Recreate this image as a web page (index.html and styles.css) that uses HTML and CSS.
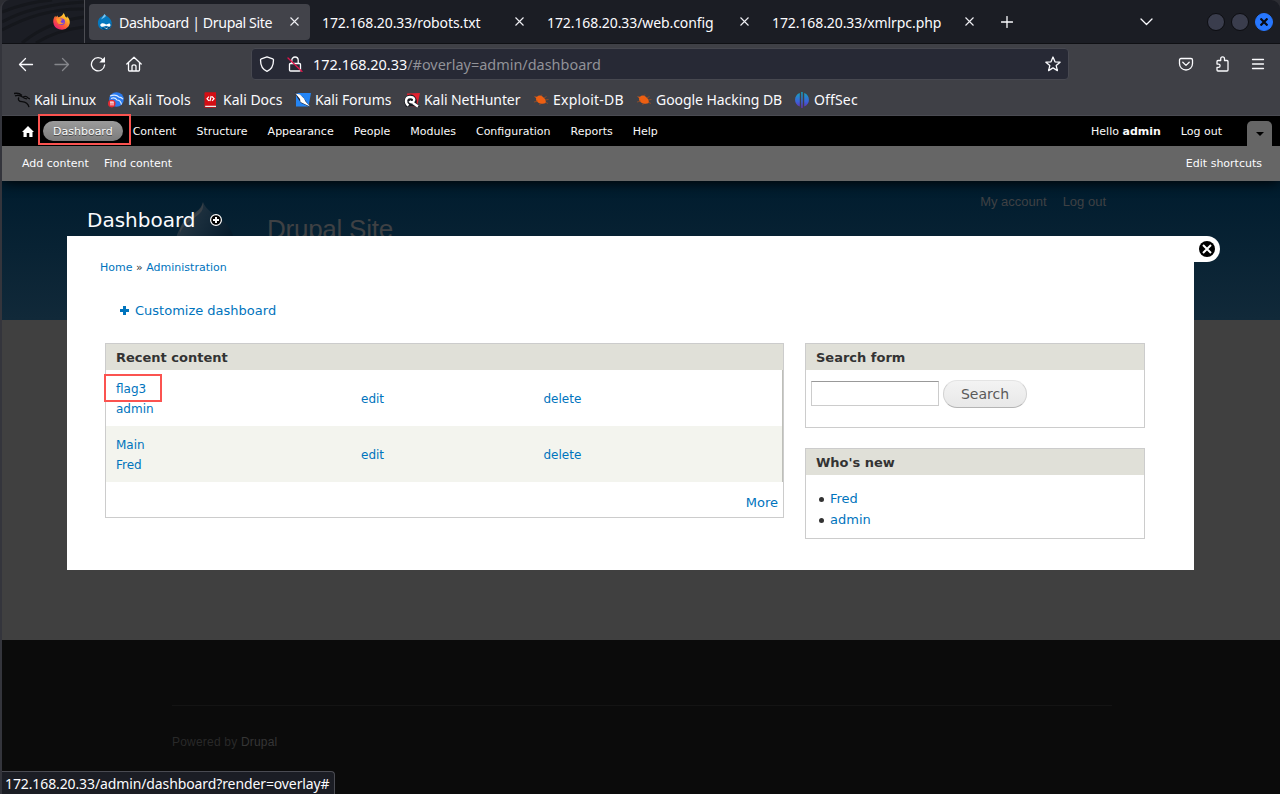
FILE: index.html
```html
<!DOCTYPE html>
<html lang="en">
<head>
    <meta charset="UTF-8">
    <meta name="viewport" content="width=device-width, initial-scale=1.0">
    <title>Dashboard | Drupal Site</title>
    <link rel="stylesheet" href="styles.css">
</head>
<body>
    <div class="window">
        <!-- Tab strip -->
        <div class="tabs">
            <div class="pinned">
                <svg class="wallpaper" width="82" height="43" viewBox="0 0 82 43">
                    <path d="M0 22Q30 5 82 2M0 30Q40 8 82 9M20 43Q45 22 82 17M34 43Q55 30 82 27M0 12Q25 2 50 0"/>
                </svg>
                <svg class="firefox" width="17" height="17" viewBox="0 0 16 16">
                    <defs>
                        <linearGradient id="fox" x1="1" y1="0" x2="0.2" y2="1">
                            <stop offset="0" stop-color="#fff44f"/>
                            <stop offset="0.35" stop-color="#ffb02a"/>
                            <stop offset="0.65" stop-color="#ff5a36"/>
                            <stop offset="1" stop-color="#e5177b"/>
                        </linearGradient>
                    </defs>
                    <path fill="url(#fox)" d="M10 0c1 1.500 1.300 2.300 1.500 3.200.9.300 1.400.8 1.900 1.400 0-.8-.1-1.200-.4-1.800 3.300 3 3.600 7.200 1.300 10.100A8 8 0 0 1 .2 8.500c0-2.800.7-4.500 2-6l.5 1.700 1.300-1.900c.2.800.6 1.300 1.100 1.700C7 3.300 8.900 2.700 10 0z"/>
                    <circle cx="8.200" cy="8.200" r="3" fill="#7540d8"/>
                    <path fill="#ff9a2e" d="M3 5.500c1.800-1 3.400-.5 4.300.3l1.600.4c-.2.900-1.400 1-1.700 1.600-.3 1.400 1.500 2 3.200 1.200-1.200 2.400-6 2-6.600-.8z"/>
                </svg>
            </div>
            <div class="tab active">
                <svg class="favicon" width="16" height="16" viewBox="0 0 16 16">
                    <path fill="#0678be" d="M7.500 0c1 1.700 2.600 2.200 4 3.300 4.300 3.500 4.200 9.200.7 11.600-3 2-7.800 1.200-9.900-1.500C-.2 9.700.9 5 3.800 3.100 5.200 2.200 7 1.500 7.500 0z"/>
                    <path fill="#00497c" d="M4.500 13.500c3 .8 7.500-.6 9.800-4.500.1 4-3 6.900-6.500 6.900-1.400 0-2.700-1-3.300-2.400z"/>
                    <path fill="#fff" d="M5.400 9.200c2-.3 2.700 1.200 3.900 1.200s1.900-1.200 3.100-.9c1.800.5 1.400 3.500-.6 3.300-1 0-1.800-1-2.700-1-1 0-1.800 1.100-3.400 1-3.300-.2-3-3.300-.3-3.600zM7.300 13.600c1.300.6 2.500.5 3.800-.1-.6 1.700-3.200 1.700-3.800.1z"/>
                    <path fill="#7cc4ee" d="M7.500 0l1.500 2-2 1.800-3 1.600z"/>
                </svg>
                <span class="tab-title title-main">Dashboard | Drupal Site</span>
                <svg class="close" width="9" height="9" viewBox="0 0 9 9"><path d="M.5.5l8 8M8.500.5l-8 8"/></svg>
            </div>
            <div class="tab">
                <span class="tab-title">172.168.20.33/robots.txt</span>
                <svg class="close" width="9" height="9" viewBox="0 0 9 9"><path d="M.5.5l8 8M8.500.5l-8 8"/></svg>
            </div>
            <div class="tab">
                <span class="tab-title">172.168.20.33/web.config</span>
                <svg class="close" width="9" height="9" viewBox="0 0 9 9"><path d="M.5.5l8 8M8.500.5l-8 8"/></svg>
            </div>
            <div class="tab">
                <span class="tab-title">172.168.20.33/xmlrpc.php</span>
                <svg class="close" width="9" height="9" viewBox="0 0 9 9"><path d="M.5.5l8 8M8.500.5l-8 8"/></svg>
            </div>
            <svg class="line-icon new-tab" width="12" height="12" viewBox="0 0 12 12"><path d="M6 .5v11M.5 6h11"/></svg>
            <svg class="line-icon all-tabs" width="13" height="8" viewBox="0 0 13 8"><path d="M1 1l5.500 5.500L12 1"/></svg>
            <div class="window-buttons">
                <span class="dot"></span>
                <span class="dot"></span>
                <span class="dot dot-close">
                    <svg width="8" height="8" viewBox="0 0 8 8"><path d="M.5.500l7 7M7.500.500l-7 7"/></svg>
                </span>
            </div>
        </div>

        <!-- Navigation bar -->
        <div class="navbar">
            <div class="nav-buttons">
                <svg class="line-icon" width="16" height="16" viewBox="0 0 16 16"><path d="M14.500 8.500h-13M7.500 2.500l-6 6 6 6"/></svg>
                <svg class="line-icon disabled" width="16" height="16" viewBox="0 0 16 16"><path d="M1 8.500h13.500M8.500 2.500l6 6-6 6"/></svg>
                <svg class="line-icon" width="16" height="16" viewBox="0 0 16 16"><path d="M13.300 4.300A6.600 6.600 0 1 0 14.600 9"/><path class="solid" d="M15 .8v5.700H9.300z"/></svg>
                <svg class="line-icon" width="16" height="16" viewBox="0 0 16 16"><path d="M.8 8L8 1.200 15.200 8M2.500 6.800V14c0 .6.400 1 1 1h9c.6 0 1-.4 1-1V6.800M6 15v-4.500c0-1 .8-1.700 2-1.700s2 .7 2 1.700V15"/></svg>
            </div>
            <div class="urlbar">
                <svg class="line-icon" width="16" height="16" viewBox="0 0 16 16"><path d="M8 .8l5.700 2c.5.200.8.500.8 1C14.500 9 12.700 13.500 8 15.300 3.300 13.500 1.500 9 1.500 3.800c0-.5.300-.8.800-1z"/></svg>
                <svg class="line-icon lock" width="16" height="16" viewBox="0 0 16 16"><path d="M4.800 7.500V4.200a3.200 3.200 0 0 1 6.400 0v3.300M3.500 7.500h9c.6 0 1 .4 1 1V14c0 .6-.4 1-1 1h-9c-.6 0-1-.4-1-1V8.500c0-.6.400-1 1-1z"/><path class="slash" d="M1 2l14 13.500"/></svg>
                <span class="url">172.168.20.33<span class="url-path">/#overlay=admin/dashboard</span></span>
                <svg class="line-icon star" width="16" height="16" viewBox="0 0 16 16"><path d="M8 1l2 4.800 5.100.4-3.900 3.400 1.200 5L8 11.900l-4.400 2.700 1.200-5L.9 6.200 6 5.800z"/></svg>
            </div>
            <div class="nav-tools">
                <svg class="line-icon" width="16" height="16" viewBox="0 0 16 16"><path d="M3 2.500h10c.9 0 1.500.6 1.500 1.500v3.500c0 3.700-2.800 6.500-6.500 6.500S1.500 11.200 1.500 7.500V4c0-.9.600-1.500 1.500-1.500zM4.800 6.300L8 9.400l3.200-3.100"/></svg>
                <svg class="line-icon" width="16" height="16" viewBox="0 0 16 16"><path d="M3 5.500c0-.6.400-1 1-1h2.700V2.700a1.900 1.900 0 0 1 3.800 0v1.800H13c.6 0 1 .4 1 1V14c0 .6-.4 1-1 1H4c-.6 0-1-.4-1-1v-2.700h1.500a1.600 1.600 0 0 0 0-3.200H3z"/></svg>
                <svg class="line-icon" width="16" height="16" viewBox="0 0 16 16"><path d="M2.500 3.500h11M2.500 8h11M2.500 12.500h11"/></svg>
            </div>
        </div>

        <!-- Bookmarks -->
        <div class="bookmarks">
            <div class="bookmark linux">
                <svg width="16" height="16" viewBox="0 0 16 16"><path fill="none" stroke="#0b0b0d" stroke-width="1.300" d="M0 1.500c3-.6 6 0 8 2M1 3.800c3-1 6 0 8 1.500M5 5.500c-1.500 2 0 4 3 4.200 4 .2 6 1.300 7 5.500M9 5c2-1 4-.5 5 1l2 1M9 5c1 2 3 1.500 4 2"/></svg>
                <span>Kali Linux</span>
            </div>
            <div class="bookmark tools">
                <svg width="16" height="16" viewBox="0 0 16 16"><circle cx="8.500" cy="7.500" r="7.300" fill="#2a7bef"/><path fill="none" stroke="#dcebff" stroke-width="1.200" d="M2 4c4-1.500 7-1 9 1.200 2 0 3 .8 4 2M3 6.500c3-1.200 5 0 6 1.500 3 0 4 2 4.500 4.500"/><circle cx="3.800" cy="11.600" r="3.800" fill="#e22b35"/><path stroke="#fff" fill="none" d="M2 10h3.600M3 10v3.500M5 10v3.500"/></svg>
                <span>Kali Tools</span>
            </div>
            <div class="bookmark docs">
                <svg width="16" height="16" viewBox="0 0 16 16"><path fill="#d40e14" d="M1.500 1.500C1.500.8 2 .3 2.700.3H13v15.400H1.500z"/><path fill="#eee" d="M2.200 13.700H13V15H2.200z"/><path fill="none" stroke="#fff" stroke-width="1.200" d="M6 4.700L4 6.700l2 2.200M9 4.500l2.100 2.200L9 8.900M8.200 4L6.900 9.200"/></svg>
                <span>Kali Docs</span>
            </div>
            <div class="bookmark forums">
                <svg width="16" height="16" viewBox="0 0 16 16"><path fill="#2485f5" d="M1 1h15l-2.500 13.500H1z"/><path fill="#17243f" d="M0 0l8 5 7 10-9-4-4-6z"/><path fill="#fff" d="M.5 1.500L5 2.500l4 4 1.500 3 4.500 5-5.500-2.500-4-2-.5-3z"/></svg>
                <span>Kali Forums</span>
            </div>
            <div class="bookmark nethunter">
                <svg width="16" height="16" viewBox="0 0 16 16"><path fill="#e3212f" d="M3 1.500L16 1l-3 13.500L5 14z"/><path fill="#191b22" d="M0 10c0-4 3-7.500 7-7.500S14 8 12.500 11l3.500 4-9-1-5 1z"/><path fill="none" stroke="#fff" stroke-width="2.400" d="M4.500 13.500C.5 10.500 1.500 5 6 5c4.500 0 5 3 3.500 4.500-1 1-3 1-4-.5M9 11l5 3.500"/></svg>
                <span>Kali NetHunter</span>
            </div>
            <div class="bookmark exploit">
                <svg width="16" height="16" viewBox="0 0 16 16"><path fill="#ed5f12" d="M1 4.500l3 .3C5.500 3 8 3 10 5c2 1.400 3.300 3.600 2.800 6-2.800 1.500-7 .8-8.800-1.500C2.800 8 3 7 3.200 6z"/><path stroke="#a9501f" stroke-width=".7" fill="none" d="M8 4l1-1.500M11 6l2.500-1.500M12 8l3.500-.5M12 10l3 1.500M8 11l-1.500 2M5 9l-4 1"/></svg>
                <span>Exploit-DB</span>
            </div>
            <div class="bookmark google">
                <svg width="16" height="16" viewBox="0 0 16 16"><path fill="#ed5f12" d="M1 4.500l3 .3C5.500 3 8 3 10 5c2 1.400 3.300 3.600 2.800 6-2.800 1.500-7 .8-8.800-1.500C2.800 8 3 7 3.200 6z"/><path stroke="#a9501f" stroke-width=".7" fill="none" d="M8 4l1-1.500M11 6l2.500-1.500M12 8l3.500-.5M12 10l3 1.500M8 11l-1.500 2M5 9l-4 1"/></svg>
                <span>Google Hacking DB</span>
            </div>
            <div class="bookmark offsec">
                <svg width="16" height="16" viewBox="0 0 16 16">
                    <defs><linearGradient id="offsec" x1="0" y1="0" x2="0" y2="1"><stop offset="0" stop-color="#14a5bd"/><stop offset=".6" stop-color="#3b62d9"/><stop offset="1" stop-color="#662cae"/></linearGradient></defs>
                    <path fill="url(#offsec)" d="M5.800 1v13.500C-.5 12.500-.5 3 5.800 1zM7.200 0h1.500v16H7.200zM10.200 1c6.300 2 6.300 11.500 0 13.500z"/>
                </svg>
                <span>OffSec</span>
            </div>
        </div>

        <!-- Drupal admin toolbar -->
        <div class="toolbar">
            <div class="menu">
                <svg class="home" width="12" height="11" viewBox="0 0 12 11"><path fill="#fff" d="M6 0l6 6h-1.500v5H7.300V7H4.700v4H1.500V6H0z"/></svg>
                <a class="current">Dashboard<span class="mark mark-dashboard"></span></a>
                <a>Content</a>
                <a>Structure</a>
                <a>Appearance</a>
                <a>People</a>
                <a>Modules</a>
                <a>Configuration</a>
                <a>Reports</a>
                <a>Help</a>
            </div>
            <div class="user-menu">
                <span>Hello <strong>admin</strong></span>
                <span>Log out</span>
                <span class="toggle"></span>
            </div>
        </div>
        <div class="shortcuts">
            <span>Add content</span>
            <span>Find content</span>
            <span class="edit-shortcuts">Edit shortcuts</span>
        </div>

        <!-- Site behind the overlay -->
        <div class="site">
            <div class="site-header">
                <svg class="drop" width="60" height="60" viewBox="0 0 60 60">
                    <defs><linearGradient id="drop" x1="0" y1="0" x2="1" y2="0.500"><stop offset="0" stop-color="#2f3b45"/><stop offset="0.500" stop-color="#182c3b"/><stop offset="1" stop-color="#061b2b"/></linearGradient></defs>
                    <path fill="url(#drop)" d="M27 0c3 8 10 11 17 16 9 7 14 15 14 25 0 12-10 19-28 19S0 52 0 40c0-12 8-19 15-24C22 11 27 6 27 0z"/>
                    <path fill="#43474b" opacity=".7" d="M27 0c1 6-1 10-5 13C14 19 7 23 4 31 3 20 14 15 20 10 24 7 26 4 27 0z"/>
                </svg>
                <span class="site-name">Drupal Site</span>
                <div class="site-links"><span>My account</span><span>Log out</span></div>
            </div>
            <div class="site-body"></div>
            <div class="site-footer">
                <div class="powered">Powered by <span>Drupal</span></div>
            </div>

            <div class="overlay">
                <div class="overlay-title">
                    <h1>Dashboard</h1>
                    <svg width="12" height="12" viewBox="0 0 12 12"><circle cx="6" cy="6" r="5.400" fill="#000" stroke="#fff" stroke-width="1.200"/><path stroke="#fff" stroke-width="2" d="M6 3v6M3 6h6"/></svg>
                </div>
                <div class="overlay-close">
                    <svg width="16" height="16" viewBox="0 0 16 16"><circle cx="8" cy="8" r="8"/><path d="M4 4l8 8M12 4l-8 8"/></svg>
                </div>
                <div class="overlay-content">
                    <div class="breadcrumb"><a>Home</a> » <a>Administration</a></div>
                    <div class="customize">
                        <svg width="9" height="9" viewBox="0 0 9 9"><path d="M4.500 0v9M0 4.500h9"/></svg>
                        <a>Customize dashboard</a>
                    </div>
                    <div class="dashboard">
                        <div class="block recent">
                            <h2>Recent content</h2>
                            <div class="rows">
                                <div class="row">
                                    <div class="node"><a class="flag">flag3<span class="mark mark-flag"></span></a><a>admin</a></div>
                                    <a>edit</a>
                                    <a>delete</a>
                                </div>
                                <div class="row even">
                                    <div class="node"><a>Main</a><a>Fred</a></div>
                                    <a>edit</a>
                                    <a>delete</a>
                                </div>
                            </div>
                            <a class="more">More</a>
                        </div>
                        <div class="sidebar">
                            <div class="block search">
                                <h2>Search form</h2>
                                <div class="search-form">
                                    <input type="text">
                                    <button>Search</button>
                                </div>
                            </div>
                            <div class="block">
                                <h2>Who's new</h2>
                                <ul>
                                    <li><a>Fred</a></li>
                                    <li><a>admin</a></li>
                                </ul>
                            </div>
                        </div>
                    </div>
                </div>
            </div>
        </div>
        <div class="status">172.168.20.33/admin/dashboard?render=overlay#</div>
    </div>
</body>
</html>
```

FILE: styles.css
```css
* {
    box-sizing: border-box;
}

body {
    margin: 0;
    background: #2c2d33;
    font-family: 'Noto Sans', sans-serif;
    font-size: 14px;
    color: #fbfbfe;
    overflow: hidden;
}

svg {
    display: block;
    flex: none;
}

.window {
    position: relative;
    height: 794px;
    border-left: 2px solid #34353c;
    border-radius: 9px 9px 0 0;
    overflow: hidden;
    white-space: nowrap;
}

/* Tab strip */
.tabs {
    display: flex;
    align-items: center;
    height: 44px;
    background: #1b1d24;
    border-bottom: 1px solid #0f1014;
}

.pinned {
    position: relative;
    width: 83px;
    height: 43px;
    padding: 13px 0 0 51px;
    border-right: 1px solid #4c4d53;
}

.wallpaper {
    position: absolute;
    top: 0;
    left: 0;
    fill: none;
    stroke: #15171c;
    stroke-width: 3;
}

.firefox {
    position: relative;
}

.tab {
    display: flex;
    align-items: center;
    width: 221px;
    height: 36px;
    margin-left: 4px;
    padding: 0 11px 0 8px;
    border-radius: 4px;
}

.tab.active {
    background: #42434a;
}

.favicon {
    margin-right: 6px;
}

.tab-title {
    padding-top: 2px;
    letter-spacing: -0.09px;
}

.title-main {
    font-size: 14.2px;
    letter-spacing: -0.4px;
}

.close {
    margin-left: auto;
    fill: none;
    stroke: #f0f0f4;
    stroke-width: 1.1;
}

.line-icon {
    fill: none;
    stroke: #fbfbfe;
    stroke-width: 1.3;
    stroke-linejoin: round;
    stroke-linecap: round;
}

.line-icon .solid {
    fill: #fbfbfe;
    stroke: none;
}

.line-icon.disabled {
    stroke: #85868b;
}

.new-tab {
    margin-left: 16px;
}

.all-tabs {
    margin-left: auto;
}

.window-buttons {
    display: flex;
    align-items: center;
    gap: 6px;
    margin: 0 7px 0 54px;
}

.dot {
    width: 18px;
    height: 18px;
    border: 1px solid #0c0d11;
    border-radius: 50%;
    background: #3a3d4d;
}

.dot-close {
    display: flex;
    align-items: center;
    justify-content: center;
    background: #2777ff;
    border-color: #2777ff;
}

.dot-close path {
    stroke: #080c16;
    stroke-width: 2.2;
}

/* Navigation bar */
.navbar {
    display: flex;
    align-items: center;
    height: 40px;
    background: #3f4046;
}

.nav-buttons {
    display: flex;
    gap: 20px;
    width: 249px;
    padding-left: 16px;
}

.urlbar {
    display: flex;
    align-items: center;
    width: 818px;
    height: 32px;
    padding: 0 7px;
    border: 1px solid #474850;
    border-radius: 4px;
    background: #272935;
}

.lock {
    margin: 0 10px 0 12px;
}

.lock .slash {
    stroke: #e2154c;
}

.url {
    font-size: 14.45px;
}

.url-path {
    color: #919298;
}

.star {
    margin-left: auto;
}

.nav-tools {
    display: flex;
    gap: 20px;
    margin-left: auto;
    padding-right: 14px;
}

/* Bookmarks */
.bookmarks {
    display: flex;
    height: 32px;
    padding-left: 12px;
    background: #3f4046;
    border-bottom: 1px solid #4a4b52;
}

.bookmark {
    display: flex;
    align-items: center;
    gap: 4px;
}

.linux {
    width: 94px;
    letter-spacing: -0.1px;
}

.tools {
    width: 95px;
    letter-spacing: 0.15px;
}

.docs {
    width: 92px;
}

.forums {
    width: 109px;
    letter-spacing: -0.1px;
}

.nethunter {
    width: 129px;
    letter-spacing: -0.07px;
}

.exploit {
    width: 103px;
    letter-spacing: 0.25px;
}

.google {
    width: 158px;
    letter-spacing: -0.06px;
}

.offsec {
    letter-spacing: 0.15px;
}

/* Drupal toolbar */
.toolbar,
.shortcuts,
.overlay {
    font-family: 'DejaVu Sans', sans-serif;
    font-size: 11px;
}

.toolbar {
    position: relative;
    z-index: 2;
    display: flex;
    height: 30px;
    background: #000;
    color: #fafafa;
}

.menu {
    display: flex;
    align-items: center;
    padding-left: 20px;
}

.menu a {
    height: 20px;
    padding: 0 10px;
    line-height: 22px;
}

.menu .home {
    margin-right: 9px;
}

.menu .current {
    position: relative;
    border-radius: 10px;
    background: linear-gradient(#9b9b9b, #7b7b7b);
    text-shadow: 0 1px 0 #444;
}

.mark {
    position: absolute;
    border: 2px solid #fb5350;
    z-index: 2;
}

.mark-dashboard {
    left: -5px;
    top: -7px;
    width: 93px;
    height: 31px;
}

.user-menu {
    display: flex;
    align-items: center;
    gap: 20px;
    margin-left: auto;
    padding-right: 8px;
}

.toggle {
    display: flex;
    align-self: flex-end;
    align-items: center;
    justify-content: center;
    width: 25px;
    height: 25px;
    margin-left: 5px;
    border-radius: 5px 5px 0 0;
    background: #666;
}

.toggle::after {
    content: "";
    border: 4px solid transparent;
    border-top: 4px solid #000;
    border-bottom: 0;
}

.shortcuts {
    position: relative;
    z-index: 1;
    display: flex;
    align-items: center;
    gap: 15px;
    height: 35px;
    padding: 0 18px 0 20px;
    background: #666;
    box-shadow: 0 1px 14px #000;
}

.edit-shortcuts {
    margin-left: auto;
}

/* Site behind the overlay */
.site {
    position: relative;
    font-family: 'Liberation Sans', sans-serif;
}

.site-header {
    display: flex;
    align-items: flex-start;
    height: 139px;
    padding: 0 174px;
    background: linear-gradient(#001c2e, #112939);
}

.drop {
    margin-top: 21px;
}

.site-name {
    margin: 33px 0 0 31px;
    font-size: 26px;
    letter-spacing: -0.25px;
    line-height: 30px;
    color: #3f4144;
}

.site-links {
    display: flex;
    gap: 16px;
    margin: 13px 0 0 auto;
    font-size: 13px;
    line-height: 16px;
    color: #3f4144;
}

.site-body {
    height: 320px;
    background: #404040;
}

.site-footer {
    height: 154px;
    padding: 65px 168px 0 170px;
    background: #0b0b0b;
}

.powered {
    padding-top: 28px;
    border-top: 1px solid #141414;
    font-size: 12px;
    letter-spacing: 0.2px;
    line-height: 16px;
    color: #292929;
}

.powered span {
    color: #363636;
}

/* Overlay */
.overlay {
    position: absolute;
    top: 0;
    left: 65px;
    width: 1127px;
}

.overlay-title {
    display: flex;
    align-items: center;
    gap: 14px;
    height: 55px;
    padding: 23px 0 0 20px;
}

.overlay-title h1 {
    margin: 0;
    font-size: 20px;
    font-weight: normal;
    line-height: 30px;
}

.overlay-close {
    position: absolute;
    top: 55px;
    right: -26px;
    width: 26px;
    height: 26px;
    padding: 5px;
    border-radius: 0 13px 13px 0;
    background: #fff;
}

.overlay-close path {
    stroke: #fff;
    stroke-width: 2;
}

.overlay-content {
    height: 334px;
    padding: 24px 49px 0 33px;
    background: #fff;
    color: #333;
}

.overlay-content a {
    color: #0074bd;
}

.breadcrumb {
    line-height: 16px;
}

.customize {
    display: flex;
    align-items: center;
    gap: 6px;
    margin: 25px 0 0 20px;
    font-size: 13px;
    line-height: 20px;
}

.customize svg {
    margin-bottom: 1px;
}

.customize path {
    stroke: #0074bd;
    stroke-width: 3;
}

.dashboard {
    display: flex;
    align-items: flex-start;
    gap: 21px;
    margin: 22px 0 0 5px;
}

.block {
    border: 1px solid #ccc;
}

.block h2 {
    height: 26px;
    margin: 0;
    padding-left: 10px;
    background: #e0e0d8;
    font-size: 13px;
    line-height: 28px;
}

.recent {
    width: 679px;
    height: 175px;
    font-size: 12px;
}

.rows {
    border-right: 1px solid #bebfb9;
}

.row {
    display: grid;
    grid-template-columns: 245px 182.5px 1fr;
    align-items: center;
    height: 56px;
    padding: 2px 0 0 10px;
}

.row.even {
    background: #f3f4ee;
}

.node a {
    display: block;
    line-height: 20px;
}

.node .flag {
    position: relative;
}

.mark-flag {
    left: -12px;
    top: -5px;
    width: 58px;
    height: 28px;
}

.more {
    display: block;
    padding: 11px 5px 0 0;
    font-size: 13px;
    line-height: 20px;
    text-align: right;
}

.sidebar {
    display: flex;
    flex-direction: column;
    gap: 20px;
    width: 340px;
}

.search {
    height: 85px;
}

.search-form {
    display: flex;
    align-items: flex-start;
    gap: 4px;
    padding: 10px 5px;
}

.search-form input {
    width: 128px;
    height: 25px;
    margin: 1px 0 0;
    padding: 2px;
    border: 1px solid #ccc;
    border-top-color: #999;
    background: #fff;
}

.search-form button {
    width: 84px;
    height: 28px;
    padding: 0;
    border: 1px solid #e4e4e4;
    border-right-color: #d2d2d2;
    border-bottom-color: #b4b4b4;
    border-left-color: #d2d2d2;
    border-radius: 14px;
    background: linear-gradient(#f3f3f3, #e8e8e8);
    font-family: 'DejaVu Sans', sans-serif;
    font-size: 14px;
    color: #5a5a5a;
}

.sidebar ul {
    margin: 0;
    padding: 13px 0 8px 13px;
    font-size: 13px;
    line-height: 21px;
    list-style: none;
}

.sidebar li {
    display: flex;
    align-items: center;
    gap: 6px;
}

.sidebar li::before {
    content: "";
    width: 5px;
    height: 5px;
    margin-top: 2px;
    border-radius: 50%;
    background: #333;
}

/* Link preview */
.status {
    position: absolute;
    left: 0;
    bottom: 0;
    width: 333px;
    height: 23px;
    padding-left: 3px;
    border: 1px solid #4a4b52;
    border-width: 1px 1px 0 0;
    border-radius: 0 4px 0 0;
    background: #1b1d24;
    letter-spacing: -0.11px;
    line-height: 24px;
}
```
